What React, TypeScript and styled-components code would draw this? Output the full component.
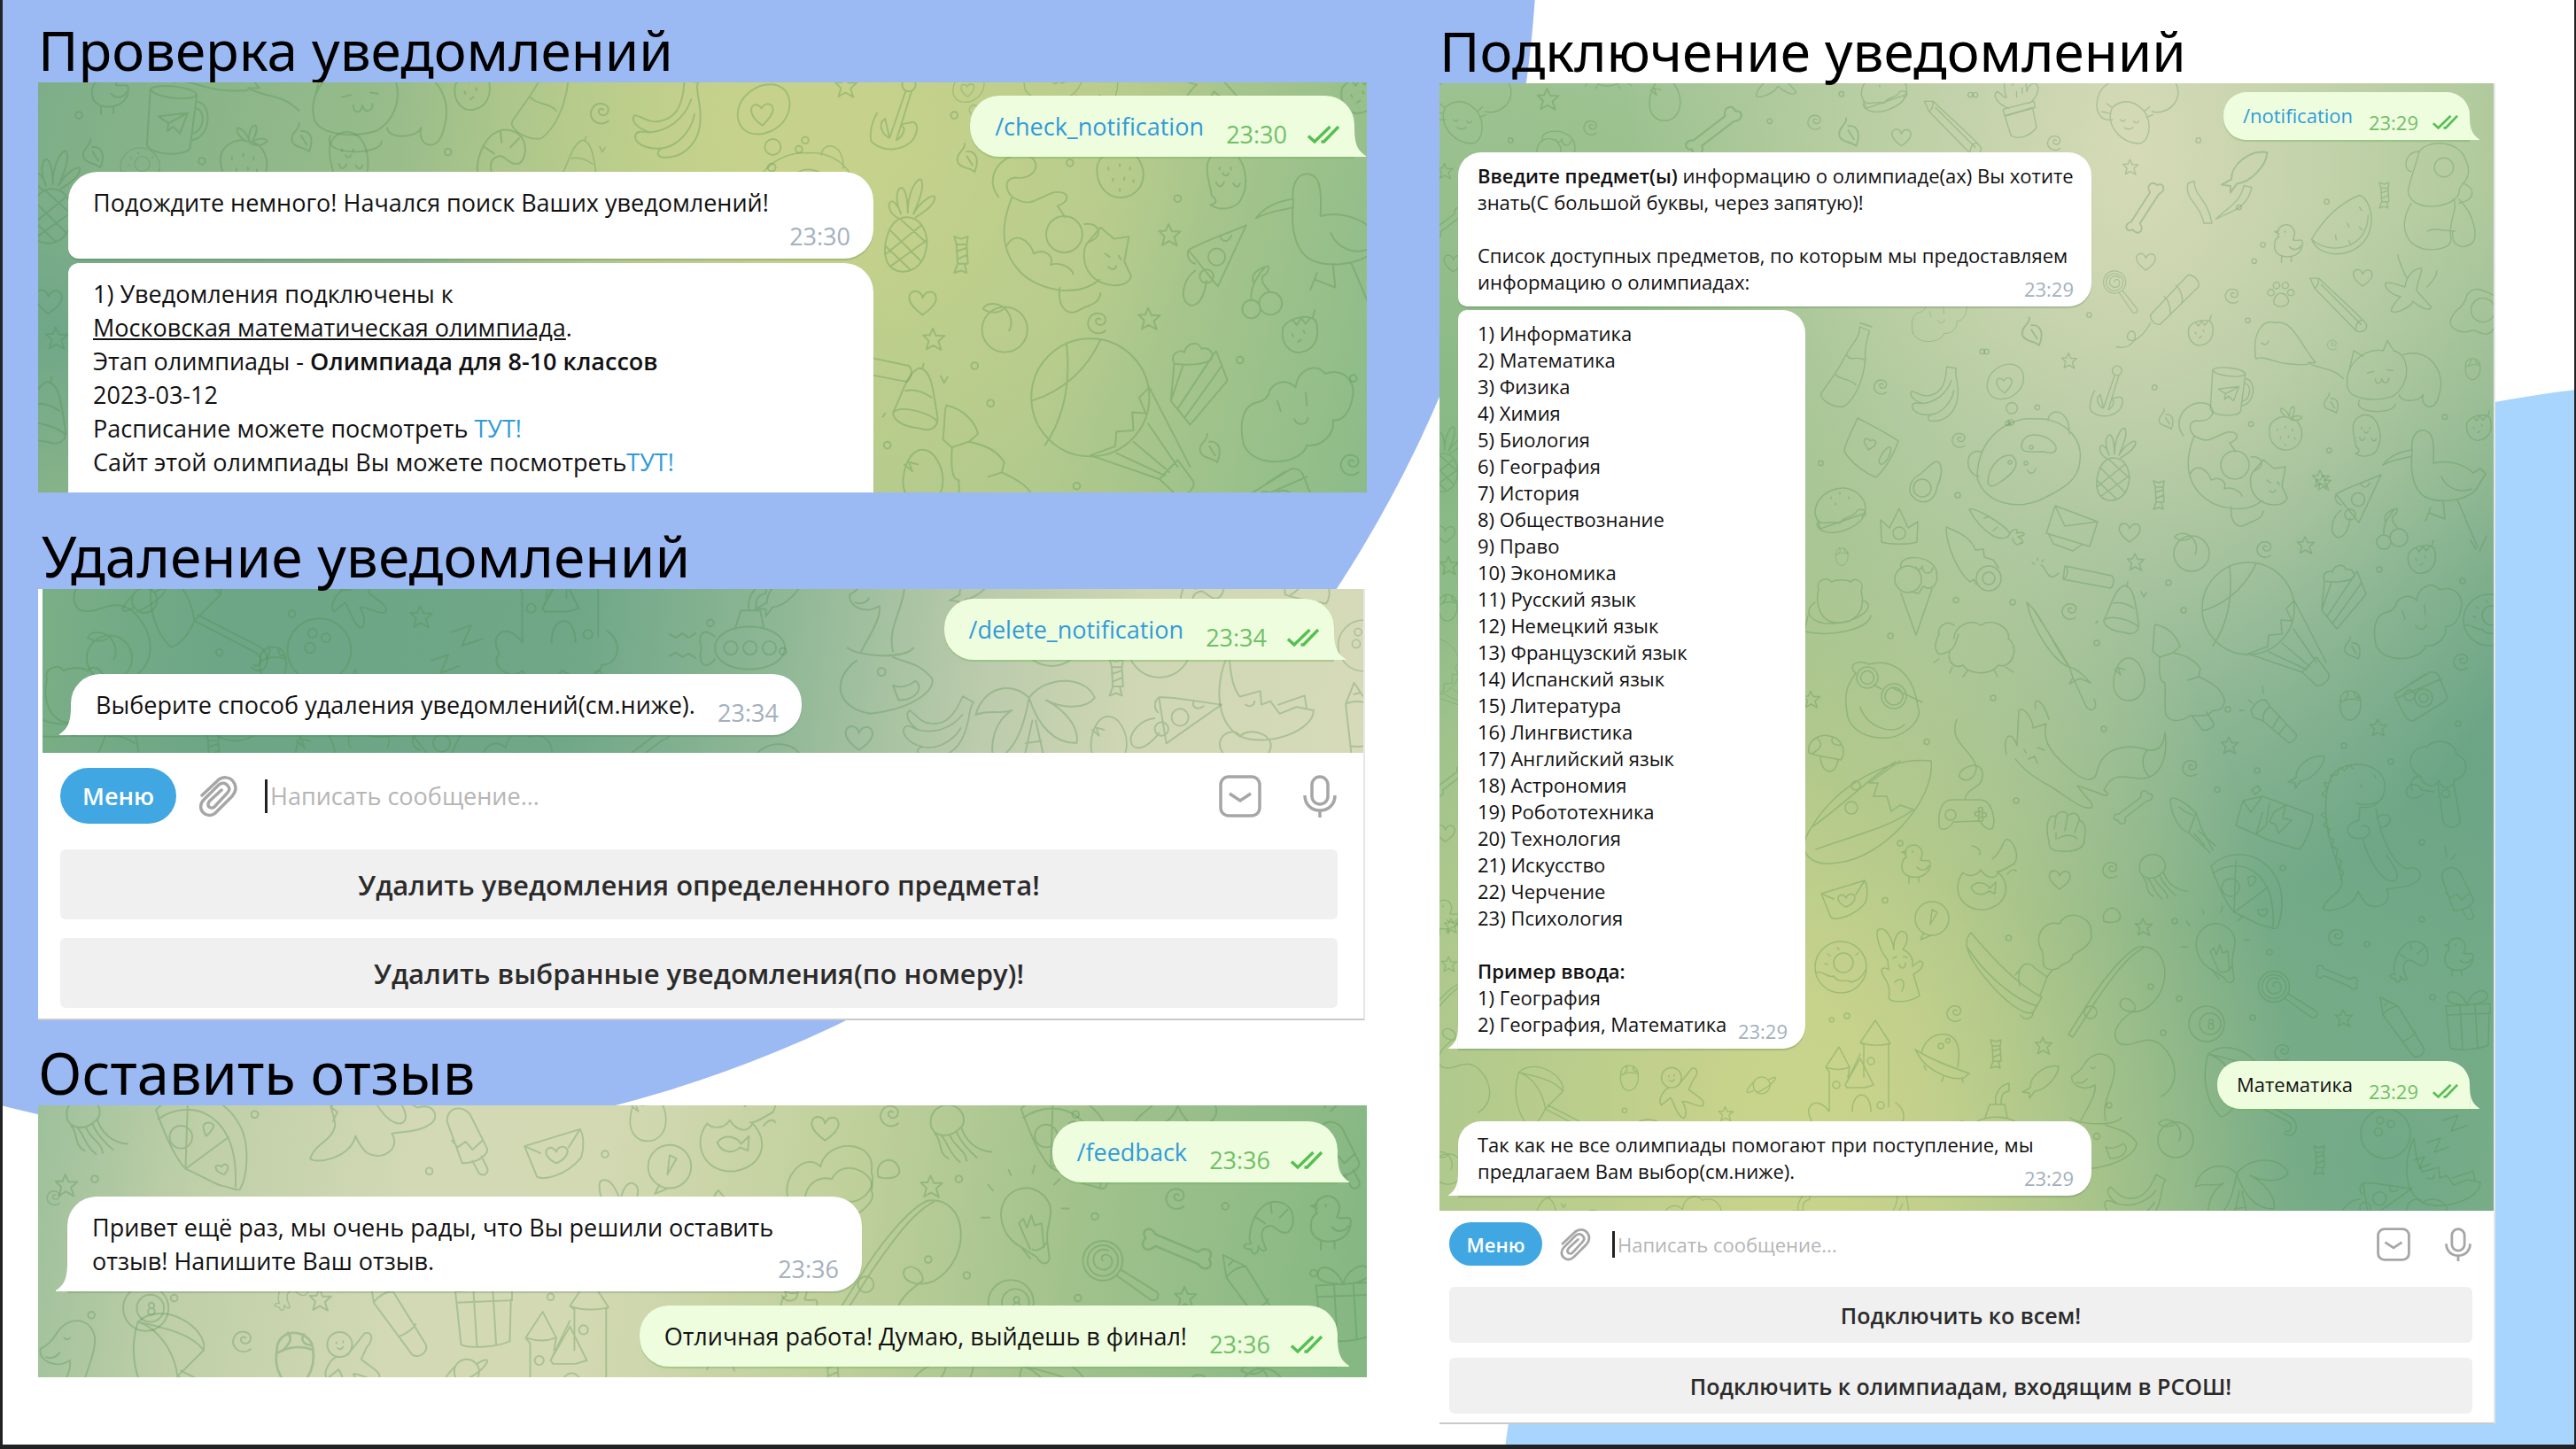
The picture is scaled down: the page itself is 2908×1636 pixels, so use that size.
import React, { Fragment, ReactNode } from "react";
import styled, { createGlobalStyle, css } from "styled-components";

/* ---------- tokens ---------- */

type Size = "lg" | "sm";

const T = {
  lg: {
    font: 27, line: 38, padTop: 16, padBottom: 15, padLeft: 28, padRight: 26, reserve: 94, reserveOut: 144,
    radius: 33, small: 12, tailW: 13, tailH: 34, metaLine: 28, metaGap: 23, metaShift: 9, tickW: 36, tickH: 20,
    menuW: 131, menuH: 63, icon: 48, barTop: 17, barBottom: 29, barLeft: 20, barRight: 25,
    keyFont: 31, keyH: 79, keyGap: 21, keyBottom: 12, keyRight: 29, caretH: 38, clipGap: 24, inputGap: 28, micGap: 42,
  },
  sm: {
    font: 22, line: 30, padTop: 11, padBottom: 13, padLeft: 22, padRight: 20, reserve: 76, reserveOut: 112,
    radius: 26, small: 10, tailW: 11, tailH: 28, metaLine: 22, metaGap: 16, metaShift: 7, tickW: 29, tickH: 16,
    menuW: 105, menuH: 49, icon: 38, barTop: 13, barBottom: 24, barLeft: 11, barRight: 21,
    keyFont: 25, keyH: 63, keyGap: 17, keyBottom: 10, keyRight: 24, caretH: 30, clipGap: 19, inputGap: 22, micGap: 35,
  },
};

const GlobalStyle = createGlobalStyle`
  * { box-sizing: border-box; }
  body { margin: 0; background: #212224; }
  body, button, input { font-family: "Open Sans", "Noto Sans", sans-serif; }
`;

/* ---------- wallpaper doodles ---------- */

const ring = (x: number, y: number, r: number) =>
  `M${x - r} ${y}a${r} ${r} 0 1 0 ${2 * r} 0a${r} ${r} 0 1 0 ${-2 * r} 0`;

const D: Record<string, string> = {
  dot: ring(0, 0, 6),
  star: "M-2 -20L4 -7L19 -7L8 3L13 18L-1 10L-13 17L-9 2L-19 -8L-7 -8Z",
  spiral: "M2 -2c-9 -6 -12 8 -2 10c12 2 16 -16 2 -20c-18 -4 -28 16 -18 28c8 9 20 8 27 2",
  heart: "M0 22C-16 10 -28 -2 -22 -14C-16 -24 -2 -20 0 -8C6 -22 22 -22 24 -8C25 4 12 14 0 22Z",
  candy: "M-8 -18l-4 -14l12 4l12 -4l-2 14zM-8 -18h18l2 34h-18zM-6 16l-6 16l12 -4l10 4l-4 -16M-8 -6l18 -6M-7 8l18 -8",
  leaf: "M-6 -24C-2 -14 -22 -8 -18 8C-14 20 4 18 12 26C20 6 16 -12 -2 -10M-2 -2L8 14",
  peach: ring(0, 4, 40) + "M0 -34C12 -20 14 -6 8 6M0 -34C-14 -44 -34 -44 -38 -32C-26 -24 -8 -24 0 -34",
  egg: "M0 -48C22 -48 36 -16 36 6C36 32 20 48 0 48C-22 48 -36 30 -34 4C-32 -22 -20 -48 0 -48ZM-32 -22l14 12l-6 -16l16 4",
  balloon:
    ring(-36, -38, 104) +
    "M-78 -134C-70 -60 -84 0 -116 46M-18 -140C-46 -80 -90 -48 -140 -32M68 -56L50 -38L62 -10L38 -12L40 20L10 22L8 48L-36 64M-36 64L86 106M10 60L96 100M40 40L104 94M66 8L118 84M68 -56L140 84M86 106L118 136C130 140 150 122 146 110L118 72Z",
  tree: "M-70 -120C-40 -114 -20 -92 -14 -70L-30 -56C0 -50 20 -40 32 -20L28 -2C62 14 80 26 86 50C88 66 74 78 60 74C50 92 20 84 8 86C-10 100 -38 102 -46 84C-50 66 -46 40 -48 12C-60 10 -62 -8 -60 -46L-76 -60C-72 -90 -74 -110 -70 -120M14 88L36 118C44 122 66 112 62 104L46 78M-30 -56L-60 -46M28 -2L4 6",
  cloud: "M-96 50C-104 10 -96 -20 -70 -24C-54 -28 -50 -40 -50 -44C-40 -60 -20 -66 -4 -50C0 -80 30 -96 48 -74C84 -86 104 -56 96 -30C92 -6 78 10 62 8C66 30 44 56 16 52C10 84 -76 98 -96 50ZM-36 -26l6 18M14 -40l2 22M-6 6c4 12 22 12 24 -2",
  popcorn: "M-42 -30L-48 36L-14 78L52 0L32 -52M-42 -30C-50 -46 -34 -56 -24 -50C-20 -68 2 -70 6 -56C22 -60 30 -44 22 -36C8 -28 -20 -26 -42 -30M-26 -28L-48 36M30 -50L-36 50M42 -26L-24 66",
  pizza: "M56 -74C20 -58 -20 -46 -46 -30L6 34ZM-46 -30C-50 -20 -44 -8 -34 -6M10 -56C12 -44 24 -42 30 -56M-34 6C-54 20 -60 50 -50 62C-40 74 -20 68 -14 24" + ring(4, -18, 15) + ring(-14, 16, 12),
  half: "M-82 -76C-40 -120 40 -110 70 -40C82 -10 80 40 66 64C60 68 50 60 34 58C20 54 10 46 -30 28C-50 6 -66 -30 -82 -76M-78 -60C-20 -100 66 -70 58 60M-30 28L-26 -88M-30 28L46 -28M34 24c-14 -8 -16 8 4 14c14 -14 2 -24 -4 -14M2 -42c-4 -14 14 -14 18 -6c-2 8 -10 16 -14 18z" + ring(-38, -28, 20),
  pineapple: "M0 -12C28 -12 40 20 34 46C28 80 0 88 -18 82C-40 74 -42 44 -34 20C-28 -2 -14 -12 0 -12M-30 10L24 64M-36 40L6 80M-10 -8L36 34M26 2L-38 54M36 28L-28 74M-14 -10C-34 -20 -34 -40 -26 -40C-20 -40 -12 -26 -10 -18C-24 -50 -14 -66 -8 -64C0 -60 2 -34 2 -20C2 -60 20 -84 26 -78C32 -66 22 -40 12 -18C24 -40 46 -54 50 -48C50 -34 32 -22 16 -12",
  cherry: ring(20, 24, 20) + ring(-14, 34, 16) + "M-14 18C-16 0 -10 -16 10 -40C20 -48 18 -30 6 -24C2 -12 12 -6 18 4M-10 -12C-16 -28 -4 -34 8 -40",
  berry: "M-30 -10C-36 20 -16 38 2 34C26 30 36 6 28 -20C20 -34 -16 -30 -30 -10M22 -26l4 -14M-14 -24l8 10l8 -12l8 10l8 -10M-14 2l2 4M6 -4l2 4M-4 16l6 -4",
  strawberry: "M-40 0C-44 -28 -10 -44 6 -36C36 -36 50 0 36 26C20 50 -10 50 -26 34C-36 24 -40 10 -40 0M6 -36C-8 -44 -14 -54 -10 -60C0 -58 8 -46 10 -38C10 -58 16 -64 22 -64C26 -54 20 -44 16 -36C30 -44 42 -40 42 -36C34 -28 22 -28 12 -32M-20 -8v4M0 -14v4M18 -8v4M-12 12v4M8 10v4M24 14v4M0 30v4",
  ghost: "M-32 -20C-32 -50 0 -62 20 -44C38 -24 40 10 30 30C22 52 -8 56 -26 44C-14 42 -14 34 -24 28C-26 10 -32 0 -32 -20M-10 -22v4M10 -22v4M-4 -12c2 6 8 6 10 0M-16 4c4 10 10 10 14 0M14 6c4 8 10 8 12 0",
  mug: "M-48 -52L-54 46C-50 64 14 68 22 52L34 -42M-48 -52C-36 -64 30 -56 34 -42C24 -30 -40 -36 -48 -52M34 -30C62 -28 60 34 24 38M32 -18C50 -16 48 20 28 26M-34 -4L18 -10L4 26L-8 14L-18 22L-16 8ZM-16 8L18 -10",
  banana: "M22 -80L46 -76C40 -62 52 -40 50 -12C50 30 20 60 -18 56C-30 52 -24 42 -16 40C-50 44 -68 28 -64 16C-60 6 -44 14 -38 12C-66 4 -72 -10 -66 -18C-56 -18 -40 -2 -20 -8C10 -14 20 -40 22 -80M-38 12C-10 10 22 -10 34 -46M-16 40C10 36 34 10 40 -20",
  bubble: "M-44 10C-46 -24 -10 -50 20 -46C50 -40 56 -6 36 20C10 50 -40 50 -44 10M0 26C-16 16 -24 2 -18 -8C-12 -14 -4 -8 -2 -4C4 -16 20 -14 18 0C16 10 8 18 0 26" + ring(18, 64, 14) + ring(16, 100, 7),
  anchor: ring(22, -60, 12) + "M16 -48L-12 34M26 -46L0 38M-34 -10C-46 10 -50 40 -40 44C-20 60 14 56 30 36C40 18 36 8 30 6L8 10L14 18C10 36 2 36 0 38M-12 34C-24 30 -30 14 -26 6L-20 0Z",
  bird: "M-48 -40C-52 -70 -40 -92 -20 -88C0 -84 2 -60 0 -14C30 -22 66 -14 90 8L106 -2L118 10L96 46C70 74 6 78 -22 60C-48 40 -52 0 -48 -40M-50 -44C-76 -40 -100 -30 -114 -10C-90 -24 -66 -24 -48 -30M18 16C30 44 60 54 86 44M22 70L26 112L-10 98M-6 86L-18 116M54 68L100 176M84 160L96 180M120 150L104 186",
  cat: "M-118 -80C-150 -120 -100 -170 -60 -150C-40 -132 -60 -110 -90 -114C-110 -110 -104 -90 -94 -80C-60 -60 -60 -74 -20 -88C10 -92 8 -70 -14 -64L0 -44M-94 -80C-110 -40 -120 10 -80 52C-50 84 20 100 60 66M-104 8C-90 -24 -60 0 -56 20C-36 10 -20 24 -26 40C-10 34 10 44 14 56M34 -32C60 -36 70 -10 40 0C30 10 30 40 44 56C60 80 110 84 116 60L104 34L112 -10L86 -6L62 -26L40 0M-10 80C-14 110 0 130 20 122C40 110 60 110 62 90M70 20l8 6M94 24l4 6M76 44c6 6 12 4 14 -2" + ring(-2, -14, 32),
  bell: "M-46 18C-30 -10 -24 -50 0 -60C20 -58 24 -30 32 24C36 44 20 54 0 46C-24 44 -46 34 -46 18C-30 4 20 20 32 34M-24 -20C-6 -24 8 -18 22 -8M6 -60l2 -8M38 -46l6 12l6 -10M-60 20l-4 6",
  umbrella: "M-74 -126L-60 -112C-40 -80 0 -20 22 20L30 44L56 100C66 130 90 116 78 92M30 44L22 58L46 46L70 56C50 36 42 26 22 20M-74 -126C-60 -60 -10 10 22 20M-60 -112C-40 -90 -20 -40 22 20",
  parasol: "M-64 -70C-20 -110 60 -60 52 -20L6 26C-4 50 -20 70 -36 72C-70 40 -80 -20 -64 -70M-64 -70C-30 -60 0 -20 6 26M-64 -70C-20 -60 30 -50 52 -20M6 26L110 80C130 90 124 110 110 104M12 16L118 70C150 86 130 130 106 108",
  bone: "M-30 14L20 -24C16 -38 32 -44 36 -32C50 -34 48 -16 34 -16L-16 22C-12 38 -28 42 -32 28C-46 30 -44 12 -30 14Z",
  fish: "M-22 14C-24 -10 10 -40 42 -34C40 -8 10 20 -12 22L-24 38L-24 26L-40 24Z",
  squid: "M-60 -62C-50 -70 -20 -50 -2 -30L10 4L36 54M-60 -62C-60 -30 -40 10 -18 14L30 60M-2 -30L-18 14M4 10L42 44M-6 16L18 44M-40 -44C-32 -36 -24 -30 -10 -26",
  camera: "M-58 -10L20 -58C30 -60 36 -56 40 -50L58 -6C60 0 58 6 50 10L-18 52C-26 52 -30 48 -34 44L-58 -2ZM-24 -32L10 -54M-54 0L48 -44" + ring(6, 0, 20) + ring(6, 0, 10) + ring(-26, -6, 12),
  torch: "M-56 -20C-50 -36 -36 -48 -24 -46L-12 -30L46 32C50 40 36 54 28 50L-28 2L-50 -6ZM-12 -30C-24 -24 -30 -12 -28 2M8 -8L-6 16M24 10L8 30M-62 -46l10 8M-30 -76l2 16M-72 -22h-10",
  shroom: "M-38 0C-44 -30 -10 -44 8 -38C40 -34 46 0 34 16C10 10 -10 10 -38 0M-12 10C-10 30 -4 40 8 42C24 40 26 26 28 16M-20 -34c10 10 16 20 -8 34M16 -36c-6 14 2 20 20 18",
  acorn: "M-22 -6C-22 -30 10 -36 22 -14C28 10 20 34 2 38C-14 40 -26 20 -22 -6M-22 -2C-8 -10 8 -12 24 -6M-8 -28c6 8 2 14 -6 22M12 -26c-6 10 4 14 10 14",
  dino: "M-100 160C-90 130 -60 130 -56 100C-60 60 -100 0 -92 -90C-88 -150 -60 -166 -20 -166C20 -164 44 -140 40 -110C38 -80 10 -64 -16 -70L-18 -40C-40 -34 -50 -20 -40 -8C-30 6 0 4 6 -12C6 -30 -6 -28 -12 -26M20 -66C30 0 60 60 90 70C120 60 130 90 110 100C90 114 60 112 44 116C60 140 30 166 0 150C-10 140 -16 130 -20 120C-30 160 -90 170 -100 160M22 -44C40 -60 60 -50 50 -34C44 -24 32 -22 28 -26M-10 0C0 40 30 100 60 98C80 90 60 60 44 40M-24 -78C0 -70 30 -80 36 -92M-16 -122l4 8M16 -142l4 8M-92 -90l-10 -10l12 -8l-6 -16l14 -2l0 -16l14 0l6 -16l12 6l10 -12l10 8M-92 -60l-12 8l14 10l-8 14l14 8l-4 16l12 8l-2 16l12 6l-4 18l12 8l-4 18l10 8l-8 16",
  broccoli: "M-54 20C-60 0 -50 -14 -34 -10C-74 -30 -60 -80 -20 -78C0 -100 44 -90 46 -60C80 -50 70 -4 42 -4C40 20 10 20 6 -2C-4 20 -30 10 -34 -10M4 6L16 90C24 112 56 106 54 88L40 6M-30 30C-54 50 -80 30 -60 10C-50 4 -34 10 -34 20L-4 24" + ring(22, 28, 9),
  popsicle: "M-30 -36C-34 -60 -6 -70 10 -50L40 10C42 20 26 36 -4 36ZM-22 -4L-12 8L2 -2L14 12L32 -4M14 32L26 54C34 60 44 54 40 44L30 24M-24 -110l4 24M0 -90l-10 10",
  bulb: "M-10 40C-50 20 -60 -40 -20 -60C10 -74 44 -50 42 -20C40 0 34 10 36 30L40 60C36 74 24 70 18 58ZM-10 40L6 60M36 30C30 44 14 48 10 44M-14 -2L6 44M-14 -2L-6 -10L0 6L8 -16L14 2L26 -2L30 40M-60 -60l-8 -10M-28 -86l-4 -10M10 -90l4 -14M48 -70l10 -10M-66 -12h-14M62 -28h12",
  lolly: ring(-26, -20, 35) + ring(-26, -20, 27) + "M-26 -20c-8 -8 10 -18 16 -2c4 18 -20 24 -30 10c-8 -20 8 -32 24 -26M-2 6L60 50C76 50 74 36 64 32L6 -4",
  shrimp: "M-20 30C-30 20 -16 -40 20 -44C60 -44 60 0 44 10C30 14 24 0 14 -2C0 0 -4 10 0 24L6 40C2 46 -6 40 -8 34C-6 50 -20 52 -20 40C-34 40 -40 30 -20 30M14 -42l2 18M-14 -18l18 12M44 -30l-14 14",
  chick: "M-20 -14C-34 -40 10 -56 16 -24C16 -14 12 -10 12 -8C22 -2 34 -14 34 0C34 40 -30 40 -30 8C-30 -4 -26 -12 -20 -14M-20 -28l-10 2l10 4M-6 -28v3M4 8C14 20 28 12 30 6M-14 30v14M8 30v12",
  pencil: "M-48 -70L-42 -30L26 62C40 70 54 56 50 44L-8 -50ZM-42 -30C-36 -40 -20 -50 -8 -50M2 30C14 26 28 16 32 8M-38 -52L-30 -60",
  gift: "M-44 -16L-36 60C-20 68 30 64 50 54L52 -20M-46 -34L54 -40L54 -18L-44 -14ZM-14 -34L-8 62M20 -38L26 60M2 -36C-10 -70 -46 -76 -42 -50C-40 -40 -20 -38 2 -36C10 -70 50 -80 48 -54C44 -42 20 -38 2 -36",
  ball: ring(0, 0, 40) + ring(8, 0, 24) + ring(10, -5, 5) + ring(10, 6, 6),
  bowling: ring(0, 0, 56) + ring(-12, -30, 8) + ring(12, -22, 8) + ring(-16, -4, 9),
  ship: "M-90 -100C-110 -80 -100 -50 -60 0C-20 50 30 90 50 80L70 46C20 20 -40 -40 -90 -100M-100 -70C-70 -20 0 50 60 66M50 80C50 96 30 100 22 86M20 20C10 -30 40 -40 54 -20L82 0L66 42M10 -4L26 -24M82 0L94 -16M94 -16C60 -20 80 -40 70 -60C50 -90 74 -130 110 -120C130 -160 190 -130 180 -100C190 -80 160 -60 140 -50C140 -30 110 -30 108 -20Z",
  rod: "M-110 96L-100 102L-48 20C-20 -20 20 -80 60 -100M-110 96L-56 10C-30 -30 20 -92 50 -102C120 -110 130 0 60 40C30 52 0 40 8 20C20 6 44 24 40 40C10 60 -20 90 4 116C40 130 60 90 100 120C140 160 140 210 100 236" + ring(-60, 46, 14),
  nessie: "M-36 90C-20 60 0 30 -4 10C-30 26 -60 10 -56 -10C-40 -20 -34 -26 -26 -40C0 -76 44 -60 40 -20C36 20 10 50 20 90M-60 84C-40 100 40 104 56 84M-14 -30c4 4 8 4 10 0M-46 4c8 4 20 0 24 -8M-44 106C-90 140 -80 190 -20 200C60 190 90 160 90 140C70 110 40 110 20 100M20 150c14 6 30 0 40 -8c14 10 4 34 -30 34z" + ring(0, 126, 7),
  palm: "M-10 -20C-40 -50 -90 -40 -104 10C-80 0 -60 10 -40 2C-70 20 -80 60 -72 90C-40 80 -20 40 -10 -20C10 40 40 60 74 60C80 30 50 0 20 -16C50 0 90 0 106 -20C90 -60 20 -60 -10 -20M-4 20L-26 120M2 20L24 120M-16 60L12 56M-20 90L18 84",
  moon: "M-60 -74C-80 -40 -90 40 -40 70C10 90 90 60 90 24L60 18L30 30L14 8L-2 14L-4 -10L-40 0C-56 -20 -56 -50 -60 -74M28 14L74 -2L78 22M-30 14c8 6 16 0 16 -6M-70 100C-90 70 -50 50 -40 70C-20 50 30 70 10 100",
  zzz: "M-50 50l24 -8l-12 26l26 -10M-20 10l30 -10l-14 32l32 -12M16 -40l34 -12l-16 36l36 -12",
  castle: "M-60 70V-20L-68 -30L-38 -76L-14 -30L-18 -8M18 -8V-80L10 -86L44 -136L78 -84L74 -80V60M-24 10L10 -60M-24 10L10 -50L40 10L20 16L-20 16ZM-68 -30C-50 -24 -30 -24 -14 -30M10 -86C30 -78 60 -78 78 -84M-8 70C-8 20 34 20 34 70M-60 70C-90 30 -120 60 -100 90C-120 110 -80 140 -60 120C-40 150 0 140 10 120C40 140 80 130 80 110C110 110 120 70 90 50" + ring(-44, 10, 8) + ring(34, -44, 8) + ring(56, 56, 8),
  ufo: "M-60 -26L-48 -6C-30 20 20 46 50 38L62 28C40 20 -20 0 -60 -26M-46 -18C-40 -44 -20 -64 10 -60C34 -56 44 -30 36 14M-40 10l4 10M4 34l-4 12M46 40l2 8" + ring(-2, -34, 6) + ring(14, -46, 5),
  donut: ring(0, 0, 58) + ring(6, -10, 22) + "M-54 12C-40 6 -30 26 -16 20C-4 40 14 24 24 34C40 30 50 20 56 6M-30 -30l6 4M-8 -44l4 4M34 -28l6 -4M-36 -8l6 2",
  bunny: "M-36 -10C-60 -40 -66 -80 -54 -80C-40 -84 -26 -60 -22 -34C-24 -60 -10 -80 0 -74C12 -70 10 -50 -2 -34C16 -26 22 -12 20 4L36 -8C50 -6 44 10 22 22L36 70C20 84 -30 90 -34 74C-26 40 -50 30 -50 12C-46 4 -36 10 -34 12ZM-24 -14l8 -4M0 -18l8 2M-10 0c4 12 14 10 14 -4M-20 40c16 -16 26 0 16 20" + ring(64, -104, 38) + "M46 -72l-8 16l24 -10M60 -90l4 -34l12 6z",
  envelope: "M-56 10L-36 -52L60 -16L42 40ZM-36 -52L-14 -6L60 -16M-50 14L-40 34L4 50L24 36",
  loveletter: "M-52 -10L46 -40C52 -30 54 -10 48 10C20 44 -20 50 -30 44ZM-52 -10L-24 2M46 -40L26 -8M4 20C-14 12 -18 -2 -10 -6C-4 -10 2 -4 4 0C8 -12 24 -12 24 0C22 10 14 16 4 20",
  carrot: "M-64 -40C-50 -44 10 -10 28 14C24 30 0 26 -10 20C-40 2 -54 -20 -64 -40M28 14C40 0 50 6 42 14C60 10 70 18 46 22C60 30 60 40 50 36C46 46 36 36 34 26M-30 -20l12 -4M-10 8l10 -8",
  comet: "M-66 -82C-40 -70 -10 -60 0 -30L18 -32L20 -14L40 -8L52 10M-66 -82C-66 -40 -40 20 -12 42L-4 36L2 48" + ring(30, 34, 28) + ring(30, 34, 14),
  cracker: "M-30 -22L76 0C84 8 80 24 72 28L-34 8ZM-30 -22C-20 -18 -24 4 -34 8M-44 -6C-70 20 -70 -20 -84 -24M-92 -40v6M-104 -30l6 4M-78 -36l-4 4",
  pillow: "M-60 10C-60 -10 -40 -40 -30 -66C0 -50 40 -30 62 -14C50 20 30 50 12 68C-10 60 -40 40 -60 10M-12 -6c-10 -14 6 -18 10 -8c10 -8 20 4 6 14l-10 6zM18 30C30 0 50 -10 44 10C40 30 20 50 18 30",
  avocado: "M-10 44C-44 30 -34 0 -14 -14C4 -24 14 -44 30 -46C44 -40 40 -10 30 10C26 36 10 50 -10 44" + ring(-4, 14, 20),
  burger: "M-56 8C-58 -40 10 -70 44 -34C60 -20 60 0 54 8L-44 42ZM-52 20C-40 40 -20 20 0 30C10 10 30 20 40 0C60 -6 64 10 50 16M-52 30C-50 50 -20 56 10 46C40 34 54 20 52 12M-20 -30v4M0 -40v4M20 -30v4M-10 -16v4",
  crown: "M-40 36L-42 -14L-22 4L0 -40L20 4L42 -10L40 36C20 42 -20 42 -40 36" + ring(0, 16, 14),
  cornet: "M-30 30L4 124L40 20" + ring(-14, -2, 30) + "M-30 -26C-40 -60 40 -60 50 -20C56 10 40 26 20 14L10 30C0 30 -6 24 -8 26M4 -30c2 12 12 6 14 -2c2 22 20 20 24 4",
  cup: "M-52 -30C-60 -50 -30 -60 -24 -46C-10 -52 10 -52 20 -46C30 -60 54 -44 44 -26C56 20 30 48 -10 46C-50 46 -60 0 -52 -30M-60 0C-90 20 -70 50 -20 48C40 44 80 10 50 -4M-76 30L-84 66C-20 80 60 60 66 30",
  sheep: "M-50 -20C-50 -50 -10 -66 10 -50C40 -70 80 -40 72 -20C100 0 80 50 50 40C30 66 -20 60 -30 40C-50 50 -66 30 -60 10M-50 -50C-70 -66 -90 -40 -84 -30C-100 0 -90 24 -70 12C-50 6 -46 -10 -40 -30M-54 44l-6 14M-20 52l-10 14M40 50l8 16M66 44l18 12M-84 26l-12 8",
  pilot: "M-80 30C-90 -20 -70 -40 -60 -56C-80 -70 -60 -90 -30 -76C20 -90 70 -60 80 20C96 50 40 96 0 90C-50 90 -80 60 -80 30M-50 20C-40 60 20 90 50 60M20 -24L90 10M-2 -20L-20 -30" + ring(26, -4, 28) + ring(26, -4, 20) + ring(-34, -46, 24) + ring(-34, -46, 15),
  surf: "M150 -110C60 -120 -60 -60 -120 40C-160 100 -120 130 -60 120C40 110 160 -20 150 -110ZM-120 40C-60 0 20 -80 70 -108M80 -110L10 -60L30 -60L20 -30L50 -30L60 4L80 -10L110 0M-110 90C-30 60 60 40 110 0" + ring(-20, -54, 10) + ring(-30, -4, 14),
  gamepad: "M-62 30C-66 -10 -50 -30 -30 -28L30 -28C54 -30 66 10 60 34C54 44 40 36 30 20L-30 22C-40 40 -60 44 -62 30M-4 -28C0 -60 40 -50 36 -90C30 -120 -20 -100 -16 -80C0 -60 30 -84 20 -110C0 -150 -40 -160 -22 -210" + ring(-36, 6, 12) + ring(24, 4, 5) + ring(40, 6, 5) + ring(32, -6, 5) + ring(32, 16, 5),
  fox: "M-140 20C-150 -20 -130 -40 -116 0L-112 -80C-100 -90 -80 -60 -80 -40L-50 -50C-60 -10 -40 20 20 66C40 80 60 80 64 60C80 -10 150 0 180 10C210 14 216 -10 218 -30C226 30 206 76 160 74C120 70 100 60 80 100C90 106 96 120 66 106L20 90C40 120 60 130 52 140C30 146 -10 110 -40 92C-100 60 -110 40 -120 30M-74 -84C-80 -110 -60 -110 -44 -60M178 10C160 30 170 60 184 70M-90 30l14 -6l6 16M-70 4l16 6M-100 8l4 8",
  fist: "M-40 20C-50 -20 -40 -44 -24 -36C-20 -50 0 -50 2 -38C16 -50 30 -40 28 -28C44 -24 44 0 40 10C44 36 20 44 -10 42C-34 42 -40 36 -40 20M-24 -36l-4 28M2 -38l-6 34M28 -28l-10 28M-20 14c14 -10 34 -10 44 0M-24 0v14",
  jelly: "M-40 -4C-50 -40 -10 -56 10 -36C22 -20 16 -6 8 -2C-6 12 -30 14 -40 -4M-34 6C-20 20 -30 40 -10 50M-22 10C-10 24 -10 40 10 56M-8 8C0 30 20 34 22 54M4 2C10 20 30 40 40 48M12 -6C20 20 40 36 66 38",
  choc: "M-86 10L-70 -46L-26 -56L88 -14C90 0 70 56 56 64L-10 44ZM-86 10L-40 30L-26 -20M-70 -46L-52 -20L-26 -56M-10 -40L-18 10L-40 30M0 -20l26 -16l-6 30l20 4l-30 30l-6 -20l-14 -6zM-50 -70l14 -10l6 10l-12 10z",
  bowl: "M-40 -30C-70 10 -40 60 10 54C60 44 70 0 40 -30C30 -10 10 -20 0 -36C-10 -20 -30 -20 -40 -30M-22 4C-10 -14 14 -6 20 6L34 -8L32 18L18 12C6 24 -14 22 -22 4M26 -60C50 -80 50 -100 56 -104C70 -110 90 -70 76 -50C60 -40 40 -30 36 -32M-20 -90c14 2 24 16 16 20M60 -26c10 -14 20 -10 20 -6",
  steam: "M-60 60C-90 20 -40 -40 -10 -10C0 -60 90 -60 80 0C90 30 60 60 30 50C20 80 -40 90 -60 60",
  panda: "M-120 40C-120 -60 -40 -100 10 -94C60 -100 120 -60 112 0C110 50 60 70 20 90C-30 110 -100 100 -120 40M-110 -20C-150 -30 -150 30 -116 36M40 -90C40 -120 90 -120 88 -60M-96 50C-96 10 -60 -20 -40 -10C-20 10 -40 30 -70 50C-84 60 -92 60 -96 50M-20 -30C-20 -60 10 -64 40 -50C70 -30 60 -10 30 -20C0 -20 -16 -16 -20 -30M-6 22c4 10 16 8 18 -4" + ring(-46, 4, 4) + ring(2, -30, 4) + ring(-10, 6, 4),
  bottle: "M30 -90L54 -80C50 -60 40 -40 44 -10C40 40 20 90 -10 110C-40 114 -74 90 -66 76C-50 50 -30 30 -10 -10C10 -50 30 -60 30 -90M-4 -20C10 0 20 -20 44 -6M-30 30C-20 44 10 40 20 56M30 -100L60 -90",
  cactus: "M-14 80L-30 30L40 10L50 60C30 86 0 90 -14 80M-34 14L44 -6L46 10L-30 32ZM-20 12C-50 0 -60 -20 -50 -30C-40 -30 -30 -10 -26 -16C-40 -60 -20 -90 0 -90C20 -90 24 -50 26 -30C30 -50 50 -60 54 -40C54 -20 40 -6 30 0M-10 -60v14M4 -70v14M0 -30v14M14 -40v14",
  melon: "M40 -80C-10 -60 -50 -20 -80 30C-60 90 70 80 70 -20C70 -50 56 -76 40 -80M-80 30C-40 70 60 60 62 -30M40 -50l6 8M10 -10l4 10M40 0l8 8M-20 20l2 12M14 34l4 12",
  crayon: "M-78 -66L-56 -66C-20 -30 40 20 64 50C66 66 50 72 38 66L-66 -40ZM-78 -66L-66 -40C-58 -46 -56 -56 -56 -66M38 66C34 50 46 36 56 40M-50 -50L50 50",
  plane: "M-6 -20C0 -60 30 -70 36 -66C36 -50 20 -20 24 -10L60 30C56 44 30 30 14 16C10 30 -30 50 -40 40C-40 30 -24 10 -16 4C-40 0 -60 -20 -54 -30C-40 -34 -16 -22 -6 -20M0 -40C-10 -60 -20 -80 -24 -100M50 -20C70 -40 74 -50 74 -60",
  dog: "M-40 -120C-20 -150 60 -150 76 -100C100 -50 60 -40 60 -20C60 20 -60 40 -68 -20C-60 -60 -50 -80 -40 -120C-80 -120 -80 -70 -60 -70M70 -40C100 -30 104 0 60 10M-60 10C-90 60 -80 110 -30 124C0 130 40 124 40 100C30 60 60 20 46 0M60 0C100 40 110 100 90 112C60 130 40 110 44 80M-20 80C0 70 20 80 50 80" + ring(22, -80, 24),
  paw: ring(-24, -6, 8) + ring(-10, -24, 8) + ring(12, -24, 8) + ring(26, -6, 8) + "M-16 22C-20 6 -6 -6 2 -4C16 -4 26 16 16 24C6 32 -10 30 -16 22",
  ribbon: "M-50 -60C-60 -20 -20 -10 -10 40L10 40C0 -20 -36 -30 -34 -66ZM40 20C60 10 100 0 110 -50L90 -54C80 -10 50 0 20 30Z",
  firework: "M40 -60C60 -60 70 -40 66 -30L-30 64C-46 66 -56 50 -54 40ZM-20 -6C-10 0 -4 20 -4 40M10 -34C20 -26 30 0 24 10M-54 60C-100 140 -130 90 -100 80C-80 90 -100 130 -140 120",
  sleeper: "M-90 30C-100 -40 -70 -70 -40 -60C0 -70 20 -10 60 40L40 40C80 60 100 50 130 80M-90 30C-60 20 -40 50 40 44M-76 -10c8 8 16 4 18 -4",
  fatcat: "M-100 40C-110 -10 -60 -60 -10 -50L0 -76L16 -50C60 -40 60 40 10 66C-40 80 -96 70 -100 40M-96 0L-84 -50L-60 -36M40 -40C100 -60 150 0 130 60C120 110 80 90 90 60C80 80 30 80 30 60M-70 74C-90 110 20 110 20 84M-50 6l16 -4M0 -2l14 2M-30 20c0 16 14 16 16 0c4 16 18 12 18 -2",
  fried: "M-70 20C-60 -10 -40 0 -30 -40C0 -80 40 -20 60 -40C90 -20 60 30 40 40C20 80 -10 40 -20 50C-50 60 -80 40 -70 20" + ring(10, -2, 30),
  axolotl: "M-50 -80C-90 -60 -90 20 -40 10M-40 -20C-60 20 -20 70 30 70C60 60 60 0 30 -20C10 -40 -20 -40 -40 -20M60 -10C100 0 140 -40 120 -80M-20 10c4 6 10 6 12 0M14 14c4 6 10 6 12 0M-10 30c8 6 16 4 22 0M-40 -20l-14 -10M-48 -6l-18 -4M40 -10l14 -12M46 4l16 -6",
  sub: "M-60 0C-60 -50 60 -50 64 0C60 50 -60 50 -60 0M-60 -20C-84 -40 -90 -20 -84 0C-90 30 -76 40 -60 20M-24 -36L-14 -66H20L26 -36M0 -66C-4 -90 10 -110 30 -114V-96C14 -94 12 -84 12 -66M-140 -24l12 6l10 -8l12 8l12 -8M-140 14l12 -6l10 8l12 -6l12 8" + ring(-32, 0, 12) + ring(2, 0, 12) + ring(36, 0, 12),
  ginger: ring(-24, -30, 22) + "M-10 -12L20 -50C36 -54 34 -36 24 -26L14 -4C30 10 54 20 44 32C30 34 10 20 0 22C10 40 10 60 0 58C-14 50 -20 20 -26 14L-46 30C-56 20 -40 -4 -30 -8M-30 -34v2M-18 -36v2M-28 -24c4 4 8 2 10 -2",
  planet: ring(0, 0, 22) + "M-18 12C-50 30 -40 10 -20 -10M18 -14C50 -34 40 -6 -12 20",
  comma: "M-18 10C-26 -20 10 -30 18 -6C26 16 -10 14 -18 10",
};

type Item = [kind: string, x: number, y: number, scale?: number, rotate?: number];
interface Cluster {
  x: number;
  y: number;
  k: number;
  items: Item[];
}

const dots = (...p: [number, number][]): Item[] => p.map(([x, y]) => ["dot", x, y]);

const mainArt: Cluster[] = [
  {
    x: 405, y: 406, k: 0.5,
    items: [
      ["panda", 524, 40], ["pineapple", 712, 46], ["candy", 814, 118], ["cat", 988, 64], ["pizza", 1260, 146],
      ["star", 1180, 82], ["bird", 1434, 60], ["cherry", 1336, 190], ["pillow", 164, 10], ["avocado", 284, 88],
      ["burger", 94, 152], ["crown", 228, 188], ["acorn", 98, 254, 0.6], ["carrot", 450, 190], ["envelope", 616, 194],
      ["heart", 748, 202], ["peach", 888, 246], ["spiral", 1056, 236], ["star", 1146, 232], ["berry", 1408, 260],
      ["comet", 400, 272], ["cracker", 632, 300], ["star", 762, 270], ["popcorn", 1230, 342], ["cloud", 1400, 406],
      ["cup", 98, 360], ["cornet", 262, 310], ["spiral", 616, 376], ["bell", 736, 382], ["balloon", 1052, 412],
      ["sheep", 402, 462], ["umbrella", 590, 486], ["egg", 746, 534], ["tree", 876, 530], ["leaf", 1252, 462],
      ["spiral", 1500, 490], ["pilot", 190, 576], ["camera", 1406, 576], ["acorn", 1246, 588], ["torch", 1078, 626],
      ["star", 1310, 644], ["star", 974, 684], ["star", 30, 580], ["shroom", 62, 700], ["surf", 150, 828],
      ["gamepad", 380, 834], ["fox", 610, 684], ["spiral", 888, 730], ["fish", 1146, 742], ["broccoli", 1440, 764],
      ["fist", 606, 880], ["bone", 754, 824], ["squid", 900, 866], ["choc", 1074, 854], ["dino", 1284, 892],
      ["chick", 264, 950], ["bowl", 412, 1000], ["heart", 590, 986], ["spiral", 708, 960], ["jelly", 812, 974],
      ["half", 1014, 1032], ["popsicle", 1484, 1020], ["loveletter", 104, 1028], ["bunny", 238, 1178],
      ["ship", 480, 1206], ["comma", 708, 1070], ["star", 780, 1094], ["donut", 96, 1184], ["bulb", 944, 1150],
      ["spiral", 1218, 1112], ["lolly", 1100, 1248], ["bone", 1214, 1206, 1, 60], ["shrimp", 1368, 1170],
      ["chick", 1490, 1160], ["rod", 720, 1240], ["ball", 922, 1312], ["star", 1232, 1300], ["pencil", 1362, 1322],
      ["gift", 1508, 1306], ["spiral", 356, 1284], ["castle", 130, 1440], ["ufo", 324, 1396], ["candy", 446, 1380],
      ["star", 554, 1362], ["fish", 546, 1442], ["nessie", 674, 1440], ["spiral", 1096, 1372], ["moon", 1450, 1646],
      ["parasol", 990, 1450], ["peach", 852, 1570], ["palm", 1000, 1670], ["candy", 1176, 1620], ["bowling", 1326, 1560],
      ["zzz", 1440, 1570], ["pizza", 1300, 1720, 1, 30], ["banana", 760, 1720, 1, 20], ["sub", 446, 1560], ["donut", 1560, 400],
      ...dots([360, 118], [836, 316], [870, 378], [674, 452], [484, 360], [208, 436], [356, 355], [440, 576], [290, 675],
        [690, 646], [970, 602], [1312, 286], [1500, 312], [1232, 684], [1338, 720], [1036, 740], [946, 783], [1408, 902],
        [1094, 960], [492, 808], [230, 904], [196, 1033], [475, 1118], [850, 1080], [1064, 1150], [1284, 1132],
        [1408, 1076], [1432, 1252], [1026, 1298], [796, 1228], [824, 1332], [860, 1255], [110, 1294], [702, 1496], [1490, 634]),
    ],
  },
  {
    x: 575, y: -94, k: 0.45,
    items: [
      ["cactus", 170, 260], ["axolotl", 450, 290], ["spiral", 268, 354], ["star", 456, 420], ["bone", 490, 524, 1.4, -20],
      ["heart", 494, 656], ["ribbon", 650, 520], ["chick", 850, 610, 1.1], ["melon", 990, 570], ["candy", 1092, 490],
      ["dog", 1220, 500], ["lolly", 430, 730, 0.8, 20], ["firework", 560, 750], ["spiral", 714, 738], ["paw", 832, 740],
      ["crayon", 984, 764], ["heart", 1038, 696], ["plane", 1150, 740], ["fried", 1330, 780],
      ["leaf", 210, 830, 1.4], ["berry", 632, 832], ["sleeper", 860, 870], ["fatcat", 1100, 930], ["star", 302, 906],
      ["bubble", 140, 960], ["anchor", 400, 990], ["mug", 710, 980], ["leaf", 546, 1050], ["leaf", 960, 1010],
      ["spiral", 964, 862, 0.7], ["strawberry", 844, 1084], ["ghost", 1046, 1094], ["star", 940, 1212], ["acorn", 1314, 922, 0.8],
      ["berry", 1330, 1070], ["fish", 740, 430, 1.4],
      ...dots([54, 238], [626, 352], [728, 520], [788, 614], [766, 655], [352, 790], [84, 882], [516, 972], [222, 1022],
        [148, 1062], [758, 1064], [954, 1130], [1244, 1046], [750, 804], [948, 506]),
    ],
  },
  {
    x: -25, y: -94, k: 0.45,
    items: [
      ["axolotl", 110, 290], ["star", 328, 250, 1.4], ["spiral", 438, 316], ["egg", 620, 250, 1.1], ["bone", 740, 330, 1.6],
      ["spiral", 1000, 302], ["leaf", 1084, 330, 1.4], ["heart", 1214, 344], ["burger", 1170, 230], ["crayon", 1350, 320],
      ["cornet", 344, 380], ["star", 70, 430], ["heart", 90, 660], ["bone", 74, 560], ["pineapple", 66, 1150],
      ["heart", 70, 1340], ["star", 80, 1420, 1.2], ["acorn", 76, 1520], ["bottle", 1080, 910], ["spiral", 1166, 966],
      ["banana", 1306, 1000], ["spiral", 1362, 1100], ["cloud", 1310, 800, 0.7], ["sheep", 470, 170, 0.8], ["plane", 890, 200],
      ["balloon", 60, 1700, 0.7], ["bone", 80, 1960], ["heart", 70, 2090], ["star", 80, 2420], ["chick", 70, 2300],
      ...dots([234, 352], [884, 304], [1064, 236], [1400, 238], [1012, 1162], [1428, 882]),
    ],
  },
  {
    x: -25, y: 906, k: 0.43,
    items: [
      ["star", 90, 106], ["rod", 60, 360], ["parasol", 330, 560], ["acorn", 556, 500], ["ginger", 696, 540, 1.2],
      ["planet", 904, 524], ["star", 810, 600], ["bowling", 606, 670], ["peach", 80, 740], ["heart", 780, 690],
      ["bell", 340, 880], ["cloud", 700, 900], ["sub", 1000, 920], ["banana", 1240, 880], ["egg", 460, 900],
      ...dots([544, 590], [1088, 352]),
    ],
  },
];

const checkArt: Cluster[] = [
  {
    x: 0, y: 0, k: 0.64,
    items: [
      ["mug", 246, 64], ["fatcat", 586, 20], ["sleeper", 330, -30], ["bottle", 896, 0, 0.9], ["spiral", 995, 50], ["banana", 1118, 76],
      ["bubble", 1278, 50], ["star", 1425, 8], ["leaf", 98, 124], ["strawberry", 362, 140], ["leaf", 466, 96], ["ghost", 546, 140],
      ["shrimp", 800, 132, 1.1], ["chick", 125, 12], ["donut", 180, 150, 0.6], ["berry", 766, 14], ["bell", 960, 150, 0.8],
      ["panda", 1350, 200, 0.8], ["pineapple", 24, 200], ["heart", 18, 386], ["star", 33, 452], ["bell", 16, 588],
      ["anchor", 1514, 64], ["bird", 2262, 250], ["pineapple", 1532, 250], ["candy", 1628, 304], ["cat", 1812, 282],
      ["leaf", 1640, 132], ["strawberry", 1908, 158], ["ghost", 2094, 172], ["star", 1996, 270], ["pizza", 2075, 326],
      ["cherry", 2154, 366], ["heart", 1560, 388], ["peach", 1705, 432], ["spiral", 1872, 420], ["star", 1960, 418],
      ["berry", 2226, 442], ["star", 1580, 454], ["popcorn", 2046, 526], ["balloon", 1892, 594], ["cloud", 2222, 588],
      ["bell", 1554, 564], ["tree", 1672, 690], ["leaf", 2068, 644], ["spiral", 2318, 670], ["egg", 1560, 696],
      ["bubble", 1640, 10, 0.6], ["fatcat", 1810, -20, 0.7], ["plane", 2060, 0], ["berry", 2330, 20], ["cracker", 1460, 500],
      ["camera", 2190, 740],
      ...dots([72, 58], [289, 139], [723, 123], [1353, 102], [1616, 58], [1342, 118], [2010, 205], [1652, 500], [1680, 566],
        [2120, 490], [2320, 522], [1498, 640], [1832, 712], [1820, 142]),
    ],
  },
];

const deleteArt: Cluster[] = [
  {
    x: 0, y: 0, k: 0.64,
    items: [
      ["rod", 60, -80], ["parasol", 262, 30], ["peach", 118, 118], ["bowling", 488, 108], ["star", 668, 50], ["zzz", 706, 116],
      ["castle", 906, 24], ["sub", 1246, 104], ["nessie", 1480, 20], ["palm", 1750, 212], ["candy", 1894, 156],
      ["pizza", 1994, 240, 1, 30], ["moon", 2152, 190], ["banana", 1580, 250, 0.9, 20], ["egg", 1880, 268, 0.9],
      ["pencil", 2320, 250, 1, 30], ["ginger", 560, 10], ["heart", 1440, 262], ["cup", 60, 190], ["donut", 340, 210],
      ["acorn", 406, 130], ["moon", 600, 200, 0.8], ["bell", 140, 280], ["cloud", 820, 320, 0.8], ["candy", 300, 285],
      ["egg", 480, 290], ["pizza", 700, 290], ["bone", 1060, 282], ["steam", 1260, 320], ["bowling", 1970, 100],
      ["bowling", 2330, 100, 0.8], ["fish", 1640, -4], ["shrimp", 2030, 6], ["planet", 180, 20], ["fish", 1300, 10],
      ["bowling", 1780, 80], ["shroom", 2230, 10],
      ...dots([440, 44], [312, 112], [980, 150], [1178, 60], [1306, 110]),
    ],
  },
];

const feedbackArt: Cluster[] = [
  {
    x: 0, y: 0, k: 0.64,
    items: [
      ["jelly", 92, 30], ["half", 290, 84], ["dino", 580, -66], ["popsicle", 752, 66], ["loveletter", 910, 82],
      ["bowl", 1220, 62], ["heart", 1388, 40], ["ship", 1290, 250], ["star", 50, 142], ["bunny", 1050, 212],
      ["spiral", 30, 160, 0.7], ["egg", 1075, 20, 0.9], ["ball", 190, 358], ["star", 498, 344], ["pencil", 634, 378],
      ["gift", 782, 362], ["parasol", 240, 452], ["spiral", 364, 412], ["acorn", 452, 440, 1.4], ["ginger", 556, 452],
      ["castle", 928, 440], ["planet", 756, 470], ["shrimp", 440, 328, 0.7], ["nessie", 60, 440], ["ufo", 1180, 420],
      ["spiral", 1506, 14], ["jelly", 1616, 44], ["star", 1576, 144], ["half", 1816, 82], ["bulb", 1744, 210],
      ["rod", 1520, 270], ["lolly", 1904, 294], ["spiral", 2010, 160], ["bone", 2006, 252, 1.3, 60], ["shrimp", 2160, 214],
      ["chick", 2278, 206, 1.1], ["gift", 2300, 352], ["pencil", 2138, 334], ["star", 2024, 340], ["ball", 1716, 348],
      ["comma", 1500, 116], ["steam", 1390, 118], ["popsicle", 2290, 90], ["dino", 2030, -120], ["candy", 1400, 470],
      ["parasol", 1800, 530], ["peach", 2160, 500], ["spiral", 2050, 488], ["fish", 1560, 490], ["chick", 1340, 350],
      ...dots([100, 130], [382, 16], [690, 116], [1000, 86], [240, 340], [94, 370], [904, 338], [2094, 178], [1864, 196],
        [1830, 16], [2250, 296], [1624, 130], [1570, 272], [1638, 300], [1834, 340]),
    ],
  },
];

const Art = styled.svg`
  position: absolute;
  inset: 0;
  width: 100%;
  height: 100%;
  fill: none;
  stroke: #4e8c4a;
  stroke-opacity: 0.31;
  stroke-width: 3;
  stroke-linecap: round;
  stroke-linejoin: round;
`;

const Doodles = ({ clusters }: { clusters: Cluster[] }) => (
  <Art aria-hidden="true">
    {clusters.map((c, i) => (
      <g key={i} transform={`translate(${c.x} ${c.y}) scale(${c.k})`}>
        {c.items.map(([kind, x, y, s = 1, r = 0], j) => (
          <path key={j} d={D[kind]} transform={`translate(${x} ${y}) rotate(${r}) scale(${s})`} />
        ))}
      </g>
    ))}
  </Art>
);

/* ---------- slide ---------- */

const Slide = styled.main`
  position: relative;
  display: grid;
  grid-template-columns: 1500fr 1192fr;
  column-gap: 82px;
  align-items: start;
  min-height: 100vh;
  padding: 0 89px 0 40px;
  overflow: hidden;
  background: #fff;
  border: solid #212224;
  border-width: 0 2px 5px 3px;
`;

const Disc = styled.div<{ $side: "left" | "right" }>`
  position: absolute;
  border-radius: 50%;
  ${({ $side }) =>
    $side === "left"
      ? css`
          left: -1043px;
          top: -1484px;
          width: 2776px;
          height: 2776px;
          background: #9bb9f2;
        `
      : css`
          left: 1685px;
          top: 431px;
          width: 2756px;
          height: 2756px;
          background: #a8d5fd;
        `}
`;

const Column = styled.div`
  position: relative;
  display: flex;
  flex-direction: column;
  min-width: 0;
`;

const Title = styled.h2<{ $top: number; $size?: number; $indent?: number; $over?: boolean }>`
  margin: 0 0 7px;
  padding: ${({ $top }) => $top}px 0 0 ${({ $indent = 0 }) => $indent}px;
  font-family: "Noto Sans", "Open Sans", sans-serif;
  font-size: ${({ $size = 62 }) => $size}px;
  line-height: 60px;
  font-weight: 400;
  color: #000;
  white-space: nowrap;
  ${({ $over }) => $over && "position: relative; z-index: 1;"}
`;

/* ---------- chat ---------- */

const backgrounds = {
  check:
    "radial-gradient(circle at 58% 10%, #c6d28b 0, #c6d28b 8%, rgba(198,210,139,0) 48%), radial-gradient(ellipse at 0% 60%, #70a788 0, rgba(112,167,136,0) 46%), linear-gradient(104deg, #7dae88 0, #b5cb8d 52%, #b3ca8d 76%, #8cbb89 100%)",
  remove:
    "linear-gradient(97deg, #7aae86 0, #6ca686 14%, #6fa787 40%, #90b896 56%, #b9caab 70%, #d0d7b4 83%, #d6dab8 100%)",
  feedback:
    "linear-gradient(98deg, #9dc09b 0, #bfcfa8 12%, #d2d9b4 28%, #d3d9b3 42%, #c0d09b 60%, #a2c28c 77%, #84b783 100%)",
  connect:
    "radial-gradient(ellipse at 66% 6%, #d6dab7 0, rgba(214,218,183,0) 52%), radial-gradient(ellipse at 34% 92%, #c9d48b 0, #c7d28b 8%, rgba(199,210,139,0) 50%), radial-gradient(ellipse at 104% 60%, #6aa486 0, #72a987 20%, rgba(114,169,135,0) 60%), radial-gradient(ellipse at 0% 34%, #86b884 0, rgba(134,184,132,0) 40%), radial-gradient(ellipse at 90% 96%, #70a887 0, rgba(112,168,135,0) 36%), linear-gradient(#9fc392, #a5c58d)",
};

const Panel = styled.section<{ $framed?: "both" | "right" }>`
  display: flex;
  flex-direction: column;
  background: #fff;
  ${({ $framed }) =>
    $framed &&
    css`
      border-right: 2px solid #e6e6e6;
      border-bottom: 2px solid #c9cacb;
    `}
  ${({ $framed }) => $framed === "both" && "padding-left: 5px; margin-right: 2px;"}
`;

const Wall = styled.div<{ $bg: keyof typeof backgrounds; $pad: string }>`
  position: relative;
  display: flex;
  flex-direction: column;
  align-items: flex-start;
  overflow: hidden;
  padding: ${({ $pad }) => $pad};
  background: ${({ $bg }) => backgrounds[$bg]};
`;

const BubbleBox = styled.article<{ $s: Size; $out?: boolean; $gap: number; $w?: number; $corners?: string }>`
  position: relative;
  display: grid;
  width: ${({ $w }) => ($w ? `${$w}px` : "fit-content")};
  max-width: 100%;
  margin-top: ${({ $gap }) => $gap}px;
  ${({ $out }) => $out && "align-self: flex-end;"}
  padding: ${({ $s }) => `${T[$s].padTop}px ${T[$s].padRight}px ${T[$s].padBottom}px ${T[$s].padLeft}px`};
  border-radius: ${({ $s, $corners, $out }) => {
    const { radius: r, small } = T[$s];
    if ($corners === "first") return `${r}px ${r}px ${r}px ${small}px`;
    if ($corners === "cut") return `${small}px ${r}px 0 0`;
    if ($corners === "last") return `${small}px ${r}px ${r}px 0`;
    return $out ? `${r}px ${r}px 0 ${r}px` : `${r}px ${r}px ${r}px 0`;
  }};
  background: ${({ $out }) => ($out ? "#effddf" : "#fff")};
  box-shadow: 0 2px 1px ${({ $out }) => ($out ? "rgba(110, 180, 90, 0.4)" : "rgba(70, 110, 70, 0.25)")};
  color: #111;
  font-size: ${({ $s }) => T[$s].font}px;
  line-height: ${({ $s }) => T[$s].line}px;
`;

const Text = styled.p<{ $reserve: number; $below?: number }>`
  grid-area: 1 / 1;
  margin: 0;
  padding-right: ${({ $reserve }) => $reserve}px;
  padding-bottom: ${({ $below = 0 }) => $below}px;
  white-space: nowrap;
`;

const Meta = styled.div<{ $s: Size; $out?: boolean }>`
  grid-area: 1 / 1;
  place-self: end;
  display: flex;
  align-items: center;
  gap: ${({ $s }) => T[$s].metaGap}px;
  margin-bottom: -4px;
  margin-right: ${({ $s, $out }) => ($out ? -T[$s].metaShift : 0)}px;
  line-height: ${({ $s }) => T[$s].metaLine}px;
  color: ${({ $out }) => ($out ? "#6fbf66" : "#a3b0bd")};
`;

const Tail = styled.svg<{ $s: Size; $out?: boolean }>`
  position: absolute;
  bottom: 0;
  width: ${({ $s }) => T[$s].tailW}px;
  height: ${({ $s }) => T[$s].tailH}px;
  ${({ $out }) => ($out ? "left: 100%;" : "right: 100%; transform: scaleX(-1);")}
  fill: ${({ $out }) => ($out ? "#effddf" : "#fff")};
`;

const Link = styled.a`
  color: #2f9bd8;
  text-decoration: none;
`;

const Strong = styled.strong`
  font-weight: 600;
`;

interface BubbleProps {
  s?: Size;
  out?: boolean;
  gap?: number;
  w?: number;
  corners?: "first" | "cut" | "last";
  time?: string;
  below?: number;
  children: ReactNode;
}

const Bubble = ({ s = "lg", out, gap = 0, w, corners, time, below, children }: BubbleProps) => (
  <BubbleBox $s={s} $out={out} $gap={gap} $w={w} $corners={corners}>
    <Text $reserve={w ? 0 : out ? T[s].reserveOut : T[s].reserve} $below={below}>
      {children}
    </Text>
    {time && (
      <Meta $s={s} $out={out}>
        <time>{time}</time>
        {out && (
          <svg width={T[s].tickW} height={T[s].tickH} viewBox="0 0 36 20" fill="none" stroke="#55bf52" strokeWidth="3.4" aria-hidden="true">
            <path d="M1 11.5L8 18L25.5 1M15.5 18H18.5L35 1" />
          </svg>
        )}
      </Meta>
    )}
    {(!corners || corners === "last") && (
      <Tail $s={s} $out={out} viewBox="0 0 13 34" aria-hidden="true">
        <path d="M0 0C0 17 2 26 13 33V34H0Z" />
      </Tail>
    )}
  </BubbleBox>
);

/* ---------- composer ---------- */

const Bar = styled.form<{ $s: Size }>`
  display: flex;
  align-items: center;
  padding: ${({ $s }) => `${T[$s].barTop}px ${T[$s].barRight}px ${T[$s].barBottom}px ${T[$s].barLeft}px`};
`;

const Menu = styled.button<{ $s: Size }>`
  width: ${({ $s }) => T[$s].menuW}px;
  height: ${({ $s }) => T[$s].menuH}px;
  padding: 0;
  border: 0;
  border-radius: 32px;
  background: #40a7e3;
  color: #fff;
  font-size: ${({ $s }) => T[$s].font}px;
  font-weight: 600;
`;

const IconButton = styled.button<{ $s: Size; $gap: number }>`
  display: flex;
  flex: none;
  width: ${({ $s }) => T[$s].icon}px;
  height: ${({ $s }) => T[$s].icon}px;
  margin-left: ${({ $gap }) => $gap}px;
  padding: 0;
  border: 0;
  background: none;
  svg {
    width: 100%;
    height: 100%;
    fill: none;
    stroke: #a6a6a6;
    stroke-width: 3.5;
  }
`;

const Caret = styled.span<{ $s: Size }>`
  flex: none;
  width: 3px;
  height: ${({ $s }) => T[$s].caretH}px;
  margin-left: ${({ $s }) => T[$s].inputGap}px;
  background: #222;
`;

const Field = styled.input<{ $s: Size }>`
  flex: 1;
  min-width: 0;
  padding: 0 0 0 3px;
  border: 0;
  outline: 0;
  background: none;
  font-size: ${({ $s }) => T[$s].font}px;
  line-height: ${({ $s }) => T[$s].line}px;
  &::placeholder {
    color: #b5b5b5;
    opacity: 1;
  }
`;

const Keys = styled.div<{ $s: Size }>`
  display: grid;
  gap: ${({ $s }) => T[$s].keyGap}px;
  padding: ${({ $s }) => `0 ${T[$s].keyRight}px ${T[$s].keyBottom}px ${T[$s].barLeft}px`};
`;

const Key = styled.button<{ $s: Size }>`
  height: ${({ $s }) => T[$s].keyH}px;
  padding: 0;
  border: 0;
  border-radius: 6px;
  background: #f0f0f0;
  color: #2b2b2b;
  font-size: ${({ $s }) => T[$s].keyFont}px;
  font-weight: 600;
`;

const Composer = ({ s, keys }: { s: Size; keys: string[] }) => (
  <Fragment>
    <Bar $s={s} onSubmit={(e) => e.preventDefault()}>
      <Menu $s={s} type="button">Меню</Menu>
      <IconButton $s={s} $gap={T[s].clipGap} type="button" aria-label="Прикрепить файл">
        <svg viewBox="0 0 48 48" strokeLinecap="round">
          <path d="M5 23L22 7C28 1 36 2 40 7C45 13 43 19 39 24L22 41C18 46 11 47 7 43C2 39 3 32 7 28L24 11C28 8 32 9 34 12C37 15 36 18 33 21L19 36C17 38 14 37 13 36C11 34 12 31 14 29L27 17" />
        </svg>
      </IconButton>
      <Caret $s={s} />
      <Field $s={s} aria-label="Сообщение" placeholder="Написать сообщение..." />
      <IconButton $s={s} $gap={0} type="button" aria-label="Скрыть клавиатуру">
        <svg viewBox="0 0 48 48">
          <rect x="2" y="2" width="44" height="44" rx="9" />
          <path d="M12 21L24 29L36 21" />
        </svg>
      </IconButton>
      <IconButton $s={s} $gap={T[s].micGap} type="button" aria-label="Голосовое сообщение">
        <svg viewBox="0 0 48 48">
          <rect x="15" y="2" width="18" height="31" rx="9" />
          <path d="M7 23C7 34 15 40 24 40C33 40 41 34 41 23M24 40V48" />
        </svg>
      </IconButton>
    </Bar>
    <Keys $s={s}>
      {keys.map((k) => (
        <Key key={k} $s={s} type="button">{k}</Key>
      ))}
    </Keys>
  </Fragment>
);

const subjects = [
  "Информатика", "Математика", "Физика", "Химия", "Биология", "География", "История", "Обществознание", "Право",
  "Экономика", "Русский язык", "Немецкий язык", "Французский язык", "Испанский язык", "Литература", "Лингвистика",
  "Английский язык", "Астрономия", "Робототехника", "Технология", "Искусство", "Черчение", "Психология",
];

export default function App() {
  return (
    <Fragment>
      <GlobalStyle />
      <Slide>
        <Disc $side="left" />
        <Disc $side="right" />
        <Column>
          <Title $top={26}>Проверка уведомлений</Title>
          <Panel>
            <Wall $bg="check" $pad="15px 14px 0 34px">
              <Doodles clusters={checkArt} />
              <Bubble out time="23:30"><Link href="#check">/check_notification</Link></Bubble>
              <Bubble gap={17} w={909} corners="first" time="23:30" below={29}>
                Подождите немного! Начался поиск Ваших уведомлений!
              </Bubble>
              <Bubble gap={5} w={909} corners="cut">
                1) Уведомления подключены к<br />
                <u>Московская математическая олимпиада</u>.<br />
                Этап олимпиады - <Strong>Олимпиада для 8-10 классов</Strong><br />
                2023-03-12<br />
                Расписание можете посмотреть <Link href="#schedule">ТУТ!</Link><br />
                Сайт этой олимпиады Вы можете посмотреть<Link href="#site">ТУТ!</Link>
              </Bubble>
            </Wall>
          </Panel>

          <Title $top={42} $size={64} $indent={4} $over>Удаление уведомлений</Title>
          <Panel $framed="both">
            <Wall $bg="remove" $pad="11px 33px 20px 32px">
              <Doodles clusters={deleteArt} />
              <Bubble out time="23:34"><Link href="#delete">/delete_notification</Link></Bubble>
              <Bubble gap={16} time="23:34">Выберите способ удаления уведомлений(см.ниже).</Bubble>
            </Wall>
            <Composer s="lg" keys={["Удалить уведомления определенного предмета!", "Удалить выбранные уведомления(по номеру)!"]} />
          </Panel>

          <Title $top={29} $size={65}>Оставить отзыв</Title>
          <Panel>
            <Wall $bg="feedback" $pad="18px 33px 12px 33px">
              <Doodles clusters={feedbackArt} />
              <Bubble out time="23:36"><Link href="#feedback">/feedback</Link></Bubble>
              <Bubble gap={16} w={897} time="23:36">
                Привет ещё раз, мы очень рады, что Вы решили оставить<br />
                отзыв! Напишите Ваш отзыв.
              </Bubble>
              <Bubble out gap={16} time="23:36">Отличная работа! Думаю, выйдешь в финал!</Bubble>
            </Wall>
          </Panel>
        </Column>

        <Column>
          <Title $top={27} $over>Подключение уведомлений</Title>
          <Panel $framed="right">
            <Wall $bg="connect" $pad="10px 27px 17px 21px">
              <Doodles clusters={mainArt} />
              <Bubble s="sm" out time="23:29"><Link href="#notification">/notification</Link></Bubble>
              <Bubble s="sm" gap={14} w={715} corners="first" time="23:29">
                <Strong>Введите предмет(ы)</Strong> информацию о олимпиаде(ах) Вы хотите<br />
                знать(С большой буквы, через запятую)!<br />
                <br />
                Список доступных предметов, по которым мы предоставляем<br />
                информацию о олимпиадах:
              </Bubble>
              <Bubble s="sm" gap={4} w={392} corners="last" time="23:29">
                {subjects.map((name, i) => (
                  <Fragment key={name}>{i + 1}) {name}<br /></Fragment>
                ))}
                <br />
                <Strong>Пример ввода:</Strong><br />
                1) География<br />
                2) География, Математика
              </Bubble>
              <Bubble s="sm" out gap={14} time="23:29">Математика</Bubble>
              <Bubble s="sm" gap={14} w={715} time="23:29">
                Так как не все олимпиады помогают при поступление, мы<br />
                предлагаем Вам выбор(см.ниже).
              </Bubble>
            </Wall>
            <Composer s="sm" keys={["Подключить ко всем!", "Подключить к олимпиадам, входящим в РСОШ!"]} />
          </Panel>
        </Column>
      </Slide>
    </Fragment>
  );
}
